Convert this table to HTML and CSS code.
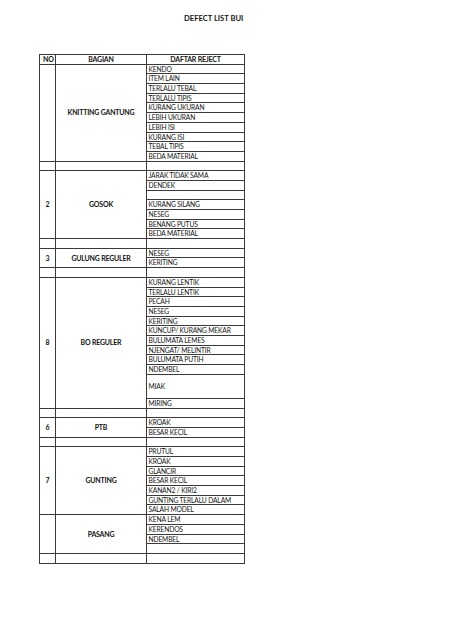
FILE: index.html
```html
<!DOCTYPE html>
<html>
<head>
<meta charset="utf-8">
<link rel="stylesheet" href="styles.css">
</head>
<body>
<div class="page">
  <h1 class="title">DEFECT LIST BUI</h1>
  <div class="sheet">
    <div class="c hd no">NO</div>
    <div class="c hd ctr">BAGIAN</div>
    <div class="c hd ctr">DAFTAR REJECT</div>

    <div class="c s10"></div>
    <div class="c b ctr s10">KNITTING GANTUNG</div>
    <div class="c">KENDO</div>
    <div class="c">ITEM LAIN</div>
    <div class="c">TERLALU TEBAL</div>
    <div class="c">TERLALU TIPIS</div>
    <div class="c">KURANG UKURAN</div>
    <div class="c">LEBIH UKURAN</div>
    <div class="c">LEBIH ISI</div>
    <div class="c">KURANG ISI</div>
    <div class="c">TEBAL TIPIS</div>
    <div class="c">BEDA MATERIAL</div>

    <div class="c"></div><div class="c"></div><div class="c"></div>

    <div class="c b ctr s7">2</div>
    <div class="c b ctr s7">GOSOK</div>
    <div class="c">JARAK TIDAK SAMA</div>
    <div class="c">DENDEK</div>
    <div class="c"></div>
    <div class="c">KURANG SILANG</div>
    <div class="c">NESEG</div>
    <div class="c">BENANG PUTUS</div>
    <div class="c">BEDA MATERIAL</div>

    <div class="c"></div><div class="c"></div><div class="c"></div>

    <div class="c b ctr s2">3</div>
    <div class="c b ctr s2">GULUNG REGULER</div>
    <div class="c">NESEG</div>
    <div class="c">KERITING</div>

    <div class="c"></div><div class="c"></div><div class="c"></div>

    <div class="c b ctr s12">8</div>
    <div class="c b ctr s12">BO REGULER</div>
    <div class="c">KURANG LENTIK</div>
    <div class="c">TERLALU LENTIK</div>
    <div class="c">PECAH</div>
    <div class="c">NESEG</div>
    <div class="c">KERITING</div>
    <div class="c">KUNCUP/ KURANG MEKAR</div>
    <div class="c">BULUMATA LEMES</div>
    <div class="c">NJENGAT/ MELINTIR</div>
    <div class="c">BULUMATA PUTIH</div>
    <div class="c">NDEMBEL</div>
    <div class="c">MIAK</div>
    <div class="c">MIRING</div>

    <div class="c"></div><div class="c"></div><div class="c"></div>

    <div class="c b ctr s2">6</div>
    <div class="c b ctr s2">PTB</div>
    <div class="c">KROAK</div>
    <div class="c">BESAR KECIL</div>

    <div class="c"></div><div class="c"></div><div class="c"></div>

    <div class="c b ctr s7">7</div>
    <div class="c b ctr s7">GUNTING</div>
    <div class="c">PRUTUL</div>
    <div class="c">KROAK</div>
    <div class="c">GLANCIR</div>
    <div class="c">BESAR KECIL</div>
    <div class="c">KANAN2 / KIRI2</div>
    <div class="c">GUNTING TERLALU DALAM</div>
    <div class="c">SALAH MODEL</div>

    <div class="c s4"></div>
    <div class="c b ctr s4">PASANG</div>
    <div class="c">KENA LEM</div>
    <div class="c">KERENDOS</div>
    <div class="c">NDEMBEL</div>
    <div class="c"></div>

    <div class="c"></div><div class="c"></div><div class="c"></div>
  </div>
</div>
</body>
</html>
```

FILE: styles.css
```css
html, body {
  margin: 0;
  padding: 0;
  background: #fff;
}

.page {
  width: 474px;
  height: 632px;
  padding-top: 13px;
  box-sizing: border-box;
  font-family: Lato, "Liberation Sans", sans-serif;
  color: #141414;
}

.title {
  margin: 0 0 0 184px;
  font-size: 7.6px;
  font-weight: 700;
  line-height: 10px;
  height: 10px;
  white-space: nowrap;
}

.sheet {
  margin: 31px 0 0 39px;
  display: grid;
  grid-template-columns: 15px 90px 97px;
  grid-template-rows: repeat(33, 8.69px) 23.2px repeat(17, 8.69px);
  gap: 1px;
  padding: 1px;
  width: max-content;
  background: #3a3a3a;
}

.c {
  background: #fff;
  font-size: 6.7px;
  letter-spacing: -0.15px;
  line-height: 8.69px;
  padding-left: 1.5px;
  white-space: nowrap;
  overflow: hidden;
  display: flex;
  align-items: center;
}

.hd,
.b {
  font-size: 7px;
  font-weight: 700;
  letter-spacing: -0.2px;
}

.no {
  padding-left: 3px;
}

.ctr {
  justify-content: center;
  padding-left: 0;
}

.s2 { grid-row: span 2; }
.s4 { grid-row: span 4; }
.s7 { grid-row: span 7; }
.s10 { grid-row: span 10; }
.s12 { grid-row: span 12; }
```
